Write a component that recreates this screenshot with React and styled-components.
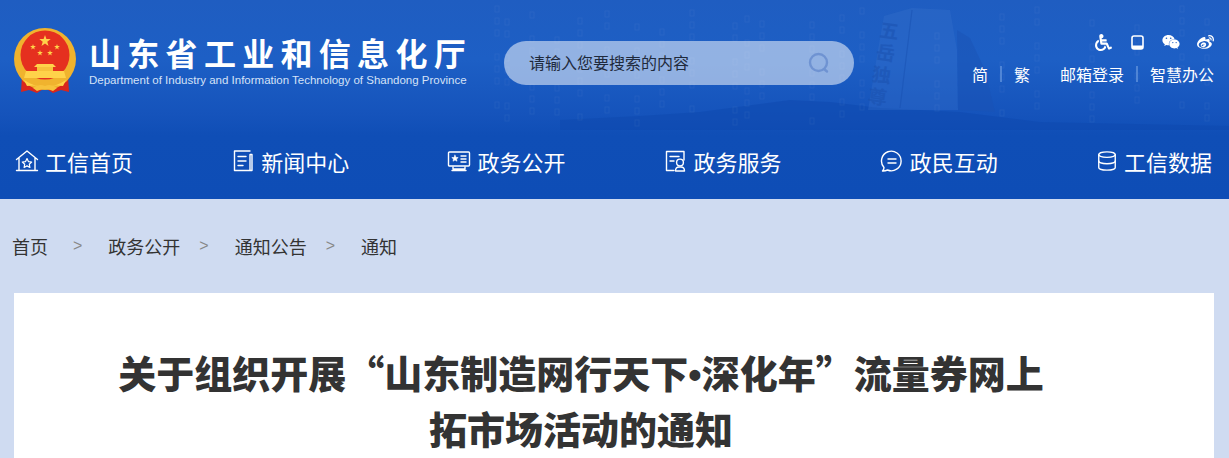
import React from "react";
import styled, { createGlobalStyle } from "styled-components";
import { FaWheelchair, FaWeixin, FaWeibo } from "react-icons/fa";
import { Database } from "lucide-react";

const CJK = `"Noto Sans CJK SC", "Liberation Sans", sans-serif`;

const GlobalStyle = createGlobalStyle`
  html, body {
    margin: 0;
    padding: 0;
    height: 458px;
    overflow: hidden;
    background: #cfdbf1;
    font-family: ${CJK};
  }
`;

const Page = styled.div`
  width: 1229px;
  height: 458px;
  overflow: hidden;
  background: #cfdbf1;
`;

const Header = styled.header`
  position: relative;
  height: 199px;
  background: linear-gradient(180deg, #1f5dc1 0%, #1d5fc5 30%, #1553bb 58%, #0f4eb6 68%, #0e4db6 100%);
  overflow: hidden;
`;

const Scenery = styled.svg`
  position: absolute;
  left: 0;
  top: 0;
`;

const TopBar = styled.div`
  position: relative;
  height: 130px;
  display: flex;
  align-items: flex-start;
`;

const Logo = styled.div`
  display: flex;
  width: 490px;
  padding: 28px 0 0 13px;
  box-sizing: border-box;
  gap: 12px;
`;

const LogoText = styled.div`
  display: flex;
  flex-direction: column;
  padding-top: 3px;
`;

const LogoTitle = styled.div`
  font-size: 32px;
  line-height: 43px;
  font-weight: 700;
  color: #fff;
  letter-spacing: 6.3px;
  white-space: nowrap;
`;

const LogoSub = styled.div`
  font-family: "Liberation Sans", Arial, sans-serif;
  font-size: 11.5px;
  line-height: 13px;
  color: #d5e2f7;
  white-space: nowrap;
`;

const Search = styled.div`
  margin: 41px 0 0 14px;
  width: 350px;
  height: 44px;
  border-radius: 22px;
  background: rgba(255, 255, 255, 0.52);
  display: flex;
  align-items: center;
  justify-content: space-between;
  padding: 0 24px 0 25px;
  box-sizing: border-box;
`;

const SearchHint = styled.span`
  font-size: 16px;
  color: #1f2a3c;
  margin-top: -2px;
`;

const Tools = styled.div`
  margin-left: auto;
  padding: 32px 15px 0 0;
  display: flex;
  flex-direction: column;
  align-items: flex-end;
`;

const IconRow = styled.div`
  display: flex;
  align-items: center;
  gap: 14px;
  height: 20px;
  margin-right: -1px;
  color: #fff;
`;

const IconSlot = styled.span`
  width: 20px;
  display: flex;
  justify-content: center;
  font-size: ${(p) => p.$size || 16}px;
`;

const LinkRow = styled.div`
  display: flex;
  align-items: center;
  margin-top: 9px;
  height: 26px;
  color: #fff;
  font-size: 16px;
`;

const Divider = styled.span`
  width: 2px;
  height: 16px;
  margin: 0 12px;
  background: #4f85d6;
`;

const LinkText = styled.span`
  margin-left: ${(p) => p.$left || 0}px;
  white-space: nowrap;
`;

const Nav = styled.nav`
  position: relative;
  height: 69px;
  display: flex;
  justify-content: space-between;
  padding: 0 17px 8px 15px;
  box-sizing: border-box;
  align-items: center;
`;

const NavItem = styled.a`
  display: flex;
  align-items: center;
  gap: 6px;
  color: #fff;
  font-size: 22px;
  line-height: 30px;
  white-space: nowrap;
`;

const Crumbs = styled.div`
  height: 94px;
  display: flex;
  align-items: center;
  padding: 0 0 0 12px;
  box-sizing: border-box;
  font-size: 18px;
  color: #333;
`;

const Crumb = styled.span`
  margin-right: 19px;
  &:first-child {
    margin-right: 25px;
  }
`;

const Sep = styled.span`
  font-family: "Liberation Sans", Arial, sans-serif;
  font-size: 16px;
  color: #888;
  margin-right: 26px;
`;

const Card = styled.main`
  margin: 0 15px 0 14px;
  height: 400px;
  background: #fff;
  padding-top: 51px;
  box-sizing: border-box;
`;

const Title = styled.h1`
  margin: 0 0 0 97px;
  width: 940px;
  text-align: center;
  font-size: 38px;
  line-height: 56px;
  font-weight: 900;
  color: #333;
`;

const Dot = styled.span`
  font-family: "Liberation Sans", Arial, sans-serif;
  font-weight: 700;
  line-height: 0;
`;

const rainColumns = [495, 505, 530, 555, 578, 605, 635, 660, 690, 733, 745, 760, 810, 840, 860, 935, 1000, 1035, 1090, 1135, 1180, 1205];

function SceneryArt() {
  const dots = [];
  rainColumns.forEach((x, c) => {
    for (let i = 0; i < 9; i++) {
      const y = 6 + ((c * 13) % 20) + i * 12;
      if ((i + c) % 4 === 3) continue;
      dots.push(<rect key={`${c}-${i}`} x={x} y={y} width="4" height="6" fill="none" stroke="#fff" strokeOpacity=".05" />);
    }
  });
  return (
    <Scenery width="1229" height="130" viewBox="0 0 1229 130">
      <path d="M560 120 L640 116 L700 112 L760 104 L790 100 L830 102 L880 108 L960 112 L1040 122 L1229 126 V130 H560 Z" fill="#0e49ae" opacity=".55" />
      <path d="M868 110 L878 50 L884 16 L912 8 L950 10 L957 50 L958 110 Z" fill="#3c74cc" opacity=".3" />
      <path d="M957 30 L970 38 L985 70 L995 112 L958 110 Z" fill="#1a52b4" opacity=".45" />
      <path d="M912 10 L900 108" stroke="#174fb0" strokeWidth="1.2" opacity=".45" />
      <g fill="#1a50ae" opacity=".5" fontFamily={CJK} fontSize="19" fontWeight="700">
        <text x="880" y="38" transform="rotate(8 890 30)">五</text>
        <text x="876" y="60" transform="rotate(8 886 54)">岳</text>
        <text x="872" y="82" transform="rotate(8 882 76)">独</text>
        <text x="868" y="104" transform="rotate(8 878 98)">尊</text>
      </g>
      {dots}
    </Scenery>
  );
}

function Emblem() {
  const star = (cx, cy, r) => {
    const pts = [];
    for (let i = 0; i < 10; i++) {
      const rad = i % 2 ? r * 0.4 : r;
      const a = (Math.PI / 5) * i - Math.PI / 2;
      pts.push(`${(cx + rad * Math.cos(a)).toFixed(1)},${(cy + rad * Math.sin(a)).toFixed(1)}`);
    }
    return <polygon points={pts.join(" ")} fill="#ffd24a" />;
  };
  return (
    <svg width="64" height="66" viewBox="0 0 64 66">
      <path d="M9 48 L8 64 L16 62 L24 65 L32 60 L40 65 L48 62 L56 64 L55 48 Z" fill="#d9261c" />
      <circle cx="32" cy="31" r="31" fill="#f0b32e" />
      <circle cx="32" cy="27" r="24.5" fill="#e5301f" />
      {star(32, 13, 6)}
      {star(20, 19, 3)}
      {star(44, 19, 3)}
      {star(27, 25, 3)}
      {star(37, 25, 3)}
      <path d="M24 36 L40 36 L43 39 L21 39 Z" fill="#ffd24a" />
      <rect x="24" y="39" width="16" height="4" fill="#f7c23c" />
      <path d="M13 43 H51 L53 50 H11 Z" fill="#ffd24a" />
      <path d="M11 52 Q32 66 53 52 L50 58 Q40 56 32 61 Q24 56 14 58 Z" fill="#ffd24a" />
      <path d="M20 60 Q26 55 32 58 Q38 55 44 60 L40 63 Q32 59 24 63 Z" fill="#f7c23c" />
    </svg>
  );
}

const NavSvg = ({ children, size = 24 }) => (
  <svg width={size} height={size} viewBox="0 0 24 24" fill="none" stroke="#fff" strokeWidth="1.4" strokeLinejoin="round" strokeLinecap="round">
    {children}
  </svg>
);

const HomeIcon = () => (
  <NavSvg>
    <path d="M1.5 10.5 L12 2 L22.5 10.5 M4 9 V21.5 H20 V9 M1.5 21.5 H22.5" />
    <path d="M12 9.5 L13.4 12.6 L16.7 13 L14.3 15.2 L14.9 18.5 L12 16.9 L9.1 18.5 L9.7 15.2 L7.3 13 L10.6 12.6 Z" strokeWidth="1.2" />
  </NavSvg>
);

const NewsIcon = () => (
  <NavSvg>
    <path d="M19 2 H3.5 V21.5 H21 V5.5 H19 V21.5 M7 7.5 H15 M7 12 H15 M7 16.5 H12" />
  </NavSvg>
);

const GovIcon = () => (
  <NavSvg>
    <rect x="1.5" y="3" width="21" height="14" rx="1" />
    <path d="M6 18 V20 H18 V18 M5 21.5 H19 M14 7 H19 M14 10 H19 M14 13 H19" />
    <path d="M8 6.2 L9 8.4 L11.2 8.6 L9.5 10 L10 12.2 L8 11 L6 12.2 L6.5 10 L4.8 8.6 L7 8.4 Z" fill="#fff" strokeWidth=".6" />
  </NavSvg>
);

const ServiceIcon = () => (
  <NavSvg>
    <path d="M10 21.5 H2.5 V2.5 H20 V11 M6 7.5 H15 M6 12 H10" />
    <circle cx="16" cy="13.5" r="3.4" />
    <path d="M11.5 22 Q11.5 18 15 18 H17 Q20.5 18 20.5 22 Z" />
  </NavSvg>
);

const TalkIcon = () => (
  <NavSvg>
    <path d="M4 18.5 A9.8 9.8 0 1 1 7.5 21 Q5 22.2 2.5 22 Q4 20.5 4 18.5 Z" />
    <path d="M8 10 H16 M8 14 H16" />
  </NavSvg>
);

const TabletIcon = () => (
  <svg width="13" height="15" viewBox="0 0 13 15">
    <rect x="1" y="1" width="11" height="13" rx="2" fill="none" stroke="#fff" strokeWidth="1.6" />
    <rect x="1" y="10.5" width="11" height="3.5" fill="#fff" />
  </svg>
);

const SearchIcon = () => (
  <svg width="22" height="22" viewBox="0 0 22 22" fill="none">
    <circle cx="10.5" cy="10.5" r="8.5" stroke="#6f93d2" strokeWidth="2.4" />
    <path d="M16 17 L19 19.5" stroke="#6f93d2" strokeWidth="2.4" strokeLinecap="round" />
  </svg>
);

const navItems = [
  { label: "工信首页", icon: <HomeIcon /> },
  { label: "新闻中心", icon: <NewsIcon /> },
  { label: "政务公开", icon: <GovIcon /> },
  { label: "政务服务", icon: <ServiceIcon /> },
  { label: "政民互动", icon: <TalkIcon /> },
  { label: "工信数据", icon: <Database size={22} strokeWidth={1.5} /> },
];

export default function App() {
  return (
    <Page>
      <GlobalStyle />
      <Header>
        <SceneryArt />
        <TopBar>
          <Logo>
            <Emblem />
            <LogoText>
              <LogoTitle>山东省工业和信息化厅</LogoTitle>
              <LogoSub>Department of Industry and Information Technology of Shandong Province</LogoSub>
            </LogoText>
          </Logo>
          <Search>
            <SearchHint>请输入您要搜索的内容</SearchHint>
            <SearchIcon />
          </Search>
          <Tools>
            <IconRow>
              <IconSlot $size={17}><FaWheelchair /></IconSlot>
              <IconSlot><TabletIcon /></IconSlot>
              <IconSlot $size={18}><FaWeixin /></IconSlot>
              <IconSlot $size={17}><FaWeibo /></IconSlot>
            </IconRow>
            <LinkRow>
              <LinkText>简</LinkText>
              <Divider />
              <LinkText>繁</LinkText>
              <LinkText $left={30}>邮箱登录</LinkText>
              <Divider />
              <LinkText>智慧办公</LinkText>
            </LinkRow>
          </Tools>
        </TopBar>
        <Nav>
          {navItems.map((item) => (
            <NavItem key={item.label}>
              {item.icon}
              {item.label}
            </NavItem>
          ))}
        </Nav>
      </Header>
      <Crumbs>
        <Crumb>首页</Crumb>
        <Sep>&gt;</Sep>
        <Crumb>政务公开</Crumb>
        <Sep>&gt;</Sep>
        <Crumb>通知公告</Crumb>
        <Sep>&gt;</Sep>
        <Crumb>通知</Crumb>
      </Crumbs>
      <Card>
        <Title>
          关于组织开展“山东制造网行天下<Dot>•</Dot>深化年”流量券网上
          <br />
          拓市场活动的通知
        </Title>
      </Card>
    </Page>
  );
}
